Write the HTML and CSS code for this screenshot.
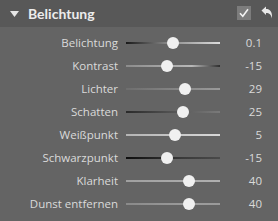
FILE: index.html
```html
<!DOCTYPE html>
<html>
<head>
<meta charset="utf-8">
<link rel="stylesheet" href="styles.css">
</head>
<body>
<div class="panel">
  <div class="header">
    <svg class="caret" width="9" height="6" viewBox="0 0 9 6"><path d="M0 0H9L4.5 6Z" fill="#e6e6e6"/></svg>
    <span class="title">Belichtung</span>
    <span class="spacer"></span>
    <svg class="check" width="14" height="14" viewBox="0 0 14 14"><rect width="14" height="14" fill="#7c7c7c"/><path d="M3 7.2L5.8 10.2L11 3.3" fill="none" stroke="#f2f2f2" stroke-width="1.6"/></svg>
    <svg class="undo" width="12" height="13" viewBox="0 0 12 13"><path d="M0.5 4.5L5 0.5V3C9 3 11.5 5.5 11 12.5C10 8.5 8.5 7 5 7V9Z" fill="#e8e8e8"/></svg>
  </div>
  <div class="rows">
    <div class="row"><span class="label">Belichtung</span><span class="track t1"><span class="knob" style="--p:50.05"></span></span><span class="value">0.1</span></div>
    <div class="row"><span class="label">Kontrast</span><span class="track t2"><span class="knob" style="--p:42.5"></span></span><span class="value">-15</span></div>
    <div class="row"><span class="label">Lichter</span><span class="track t3"><span class="knob" style="--p:64.5"></span></span><span class="value">29</span></div>
    <div class="row"><span class="label">Schatten</span><span class="track t4"><span class="knob" style="--p:62.5"></span></span><span class="value">25</span></div>
    <div class="row"><span class="label">Weißpunkt</span><span class="track t5"><span class="knob" style="--p:52.5"></span></span><span class="value">5</span></div>
    <div class="row"><span class="label">Schwarzpunkt</span><span class="track t6"><span class="knob" style="--p:42.5"></span></span><span class="value">-15</span></div>
    <div class="row"><span class="label">Klarheit</span><span class="track t7"><span class="knob" style="--p:70"></span></span><span class="value">40</span></div>
    <div class="row"><span class="label">Dunst entfernen</span><span class="track t8"><span class="knob" style="--p:70"></span></span><span class="value">40</span></div>
  </div>
</div>
</body>
</html>
```
FILE: styles.css
```css
html, body {
  margin: 0;
  padding: 0;
  background: #646464;
}
.panel {
  width: 278px;
  height: 221px;
  background: #646464;
  font-family: "Open Sans", "Noto Sans", sans-serif;
  overflow: hidden;
}
.header {
  height: 27px;
  background: #585858;
  display: flex;
  align-items: center;
  padding-left: 10px;
  padding-right: 5px;
  box-sizing: border-box;
}
.caret {
  display: block;
  margin-right: 9px;
}
.title {
  color: #ececec;
  font-family: "Lato", "Open Sans", sans-serif;
  font-weight: 700;
  font-size: 14px;
}
.spacer {
  flex: 1;
}
.check {
  display: block;
  margin-right: 10px;
  margin-top: -1px;
}
.undo {
  display: block;
  margin-top: -3px;
}
.rows {
  padding-top: 4px;
}
.row {
  height: 23px;
  display: grid;
  grid-template-columns: 118px 94px 34px;
  column-gap: 8px;
  align-items: center;
  color: #dadada;
  font-size: 11.5px;
}
.row .value {
  margin-left: -8px;
  text-align: right;
}
.label {
  text-align: right;
  white-space: nowrap;
}
.track {
  position: relative;
  height: 2px;
}
.knob {
  position: absolute;
  top: -5px;
  left: calc(var(--p) * 0.82px);
  width: 12px;
  height: 12px;
  border-radius: 50%;
  background: #f0f0f0;
}
.t1 { background: linear-gradient(to right, #1a1a1a, #8a8a8a 45%, #dcdcdc); }
.t2 { background: linear-gradient(to right, #8c8c8c, #b8b8b8 70%, #2e2e2e); }
.t3 { background: linear-gradient(to right, #6e6e6e, #9a9a9a); }
.t4 { background: linear-gradient(to right, #2a2a2a, #5c5c5c 60%, #7a7a7a); }
.t5 { background: linear-gradient(to right, #b4b4b4, #d8d8d8); }
.t6 { background: linear-gradient(to right, #0e0e0e, #3a3a3a 60%, #4a4a4a); }
.t7 { background: linear-gradient(to right, #a0a0a0, #b0b0b0); }
.t8 { background: linear-gradient(to right, #8a8a8a, #9c9c9c 70%, #9a9a9a); }
```
